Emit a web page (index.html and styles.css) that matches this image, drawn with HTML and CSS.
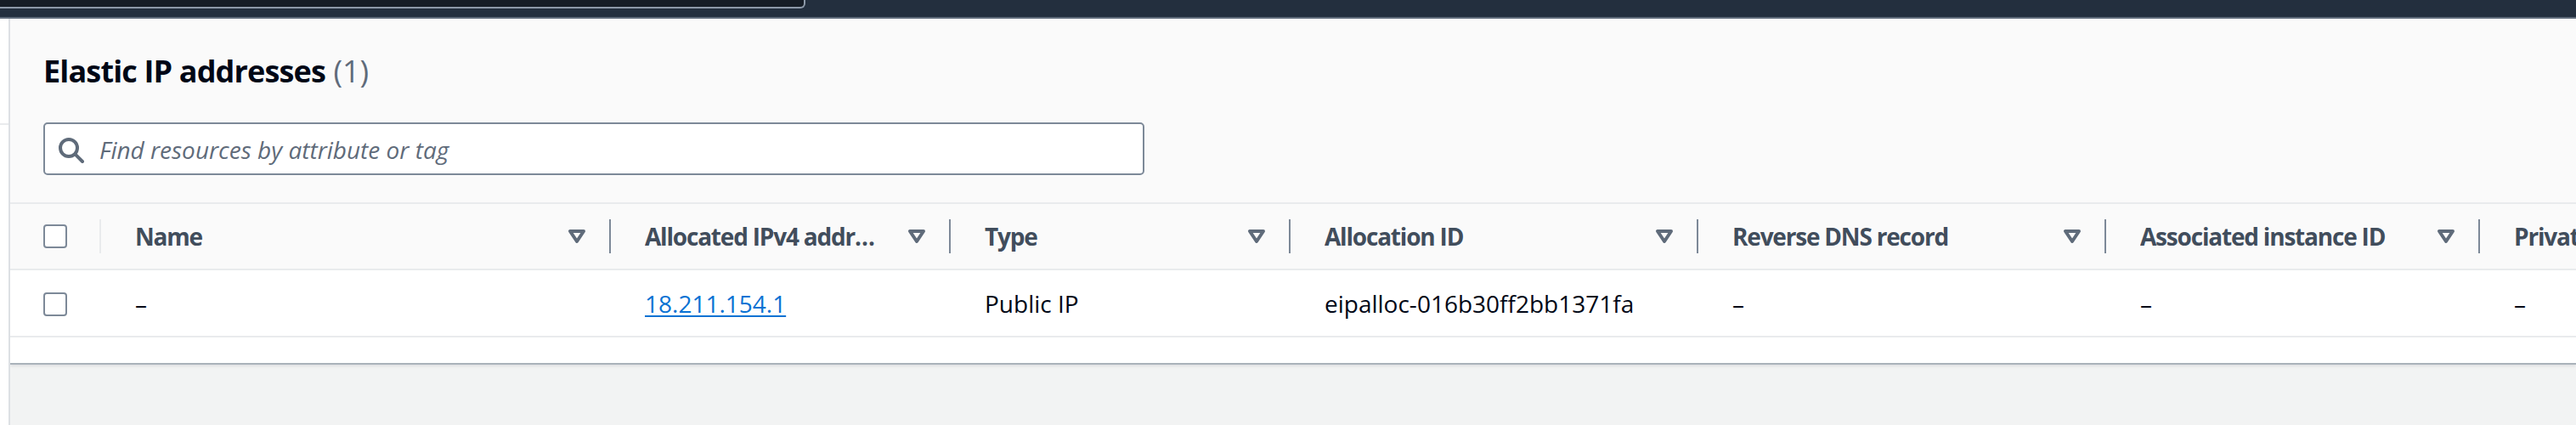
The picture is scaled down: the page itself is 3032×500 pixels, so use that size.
FILE: index.html
```html
<!DOCTYPE html>
<html lang="en">
<head>
<meta charset="utf-8">
<title>Elastic IP addresses</title>
<link rel="stylesheet" href="styles.css">
</head>
<body>
<header class="topnav">
  <div class="nav-search"></div>
</header>
<div class="layout">
  <aside class="sidenav"><div class="sidenav-top"></div></aside>
  <main class="main">
    <section class="table-container">
      <div class="tc-header">
        <h2 class="title"><span class="title-text">Elastic IP addresses</span> <span class="counter">(1)</span></h2>
        <div class="filter">
          <svg class="search-icon" viewBox="0 0 16 16" width="32" height="32" aria-hidden="true"><circle cx="7" cy="7" r="5"/><path d="M15 15l-4.3-4.3"/></svg>
          <span class="placeholder">Find resources by attribute or tag</span>
        </div>
      </div>
      <div class="table">
        <div class="row head">
          <div class="cell select"><span class="checkbox"></span><span class="sep light"></span></div>
          <div class="cell"><span class="label">Name</span><svg class="sort" viewBox="0 0 16 16" width="32" height="32"><path d="M4 5h8l-4 6z"/></svg><span class="sep"></span></div>
          <div class="cell"><span class="label">Allocated IPv4 address</span><svg class="sort" viewBox="0 0 16 16" width="32" height="32"><path d="M4 5h8l-4 6z"/></svg><span class="sep"></span></div>
          <div class="cell"><span class="label">Type</span><svg class="sort" viewBox="0 0 16 16" width="32" height="32"><path d="M4 5h8l-4 6z"/></svg><span class="sep"></span></div>
          <div class="cell"><span class="label">Allocation ID</span><svg class="sort" viewBox="0 0 16 16" width="32" height="32"><path d="M4 5h8l-4 6z"/></svg><span class="sep"></span></div>
          <div class="cell"><span class="label">Reverse DNS record</span><svg class="sort" viewBox="0 0 16 16" width="32" height="32"><path d="M4 5h8l-4 6z"/></svg><span class="sep"></span></div>
          <div class="cell"><span class="label">Associated instance ID</span><svg class="sort" viewBox="0 0 16 16" width="32" height="32"><path d="M4 5h8l-4 6z"/></svg><span class="sep"></span></div>
          <div class="cell"><span class="label">Private IP address</span><svg class="sort" viewBox="0 0 16 16" width="32" height="32"><path d="M4 5h8l-4 6z"/></svg><span class="sep"></span></div>
        </div>
        <div class="row body">
          <div class="cell select"><span class="checkbox"></span></div>
          <div class="cell">–</div>
          <div class="cell"><a class="link" href="#">18.211.154.1</a></div>
          <div class="cell">Public IP</div>
          <div class="cell">eipalloc-016b30ff2bb1371fa</div>
          <div class="cell">–</div>
          <div class="cell">–</div>
          <div class="cell">–</div>
        </div>
      </div>
      <div class="tc-footer"></div>
    </section>
  </main>
</div>
</body>
</html>
```

FILE: styles.css
```css
* { box-sizing: border-box; }

html, body {
  margin: 0;
  padding: 0;
}

body {
  min-height: 100vh;
  background: #f2f3f3;
  font-family: "Open Sans", "Helvetica Neue", Roboto, Arial, sans-serif;
  font-size: 28px;
  line-height: 40px;
  color: #000716;
  overflow: hidden;
}

.topnav {
  height: 22px;
  background: #232f3e;
  border-bottom: 2px solid #5f6b7a;
}

.nav-search {
  width: 948px;
  height: 10px;
  background: #161d26;
  border-right: 2px solid #8d99a8;
  border-bottom: 2px solid #8d99a8;
  border-bottom-right-radius: 6px;
}

.layout {
  display: flex;
  min-height: calc(100vh - 22px);
}

.sidenav {
  width: 12px;
  flex: none;
  background: #ffffff;
  border-right: 2px solid #dde0e4;
  padding-top: 123px;
}

.sidenav-top {
  height: 2px;
  background: #e9ebed;
}

.main {
  flex: 1;
  min-width: 0;
  overflow: hidden;
  background: #f2f3f3;
}

.table-container {
  background: #ffffff;
  border-bottom: 2px solid #aab2ba;
  box-shadow: 0 2px 3px rgba(0, 7, 22, 0.08);
}

.tc-header {
  background: #fafafa;
  padding: 40px 0 32px 39px;
}

.title {
  margin: 0;
  font-size: 36px;
  line-height: 44px;
  font-weight: 700;
  color: #000716;
}

.title-text {
  letter-spacing: -0.85px;
}

.counter {
  font-weight: 400;
  color: #5f6b7a;
}

.filter {
  margin-top: 38px;
  width: 1296px;
  height: 62px;
  display: flex;
  align-items: center;
  background: #ffffff;
  border: 2px solid #7d8998;
  border-radius: 5px;
  padding: 2px 0 0 14px;
}

.search-icon {
  flex: none;
  fill: none;
  stroke: #5f6b7a;
  stroke-width: 2;
  stroke-linecap: round;
}

.placeholder {
  margin-left: 18px;
  font-style: italic;
  color: #5f6b7a;
  line-height: 40px;
}

.table {
  overflow: hidden;
}

.row {
  display: grid;
  grid-template-columns: 107px 600px 400px 400px 480px 480px 440px 520px;
  width: max-content;
}

.row.head {
  height: 80px;
  background: #fafafa;
  border-top: 2px solid #e9ebed;
  border-bottom: 2px solid #e9ebed;
}

.row.body {
  height: 79px;
  background: #ffffff;
  border-bottom: 2px solid #e9ebed;
}

.cell {
  display: flex;
  align-items: center;
  min-width: 0;
  padding-left: 40px;
  white-space: nowrap;
}

.cell.select {
  padding-left: 39px;
}

.head .cell {
  font-weight: 700;
  color: #414d5c;
}

.label {
  flex: 1;
  min-width: 0;
  overflow: hidden;
  text-overflow: ellipsis;
  letter-spacing: -1.2px;
  padding-right: 28px;
}

.sort {
  flex: none;
  margin-right: 22px;
  fill: none;
  stroke: #5f6b7a;
  stroke-width: 2;
  stroke-linejoin: round;
}

.sep {
  flex: none;
  width: 2px;
  height: 40px;
  background: #7d8998;
}

.sep.light {
  margin-left: auto;
  background: #e9ebed;
}

.checkbox {
  flex: none;
  width: 28px;
  height: 28px;
  border: 2px solid #7d8998;
  border-radius: 4px;
  background: #ffffff;
}

.body .cell.select .checkbox {
  margin-top: 2px;
}

.link {
  color: #0972d3;
  text-decoration: underline;
  text-decoration-thickness: 2px;
  text-underline-offset: 3px;
}

.tc-footer {
  height: 30px;
  background: #ffffff;
}
```
